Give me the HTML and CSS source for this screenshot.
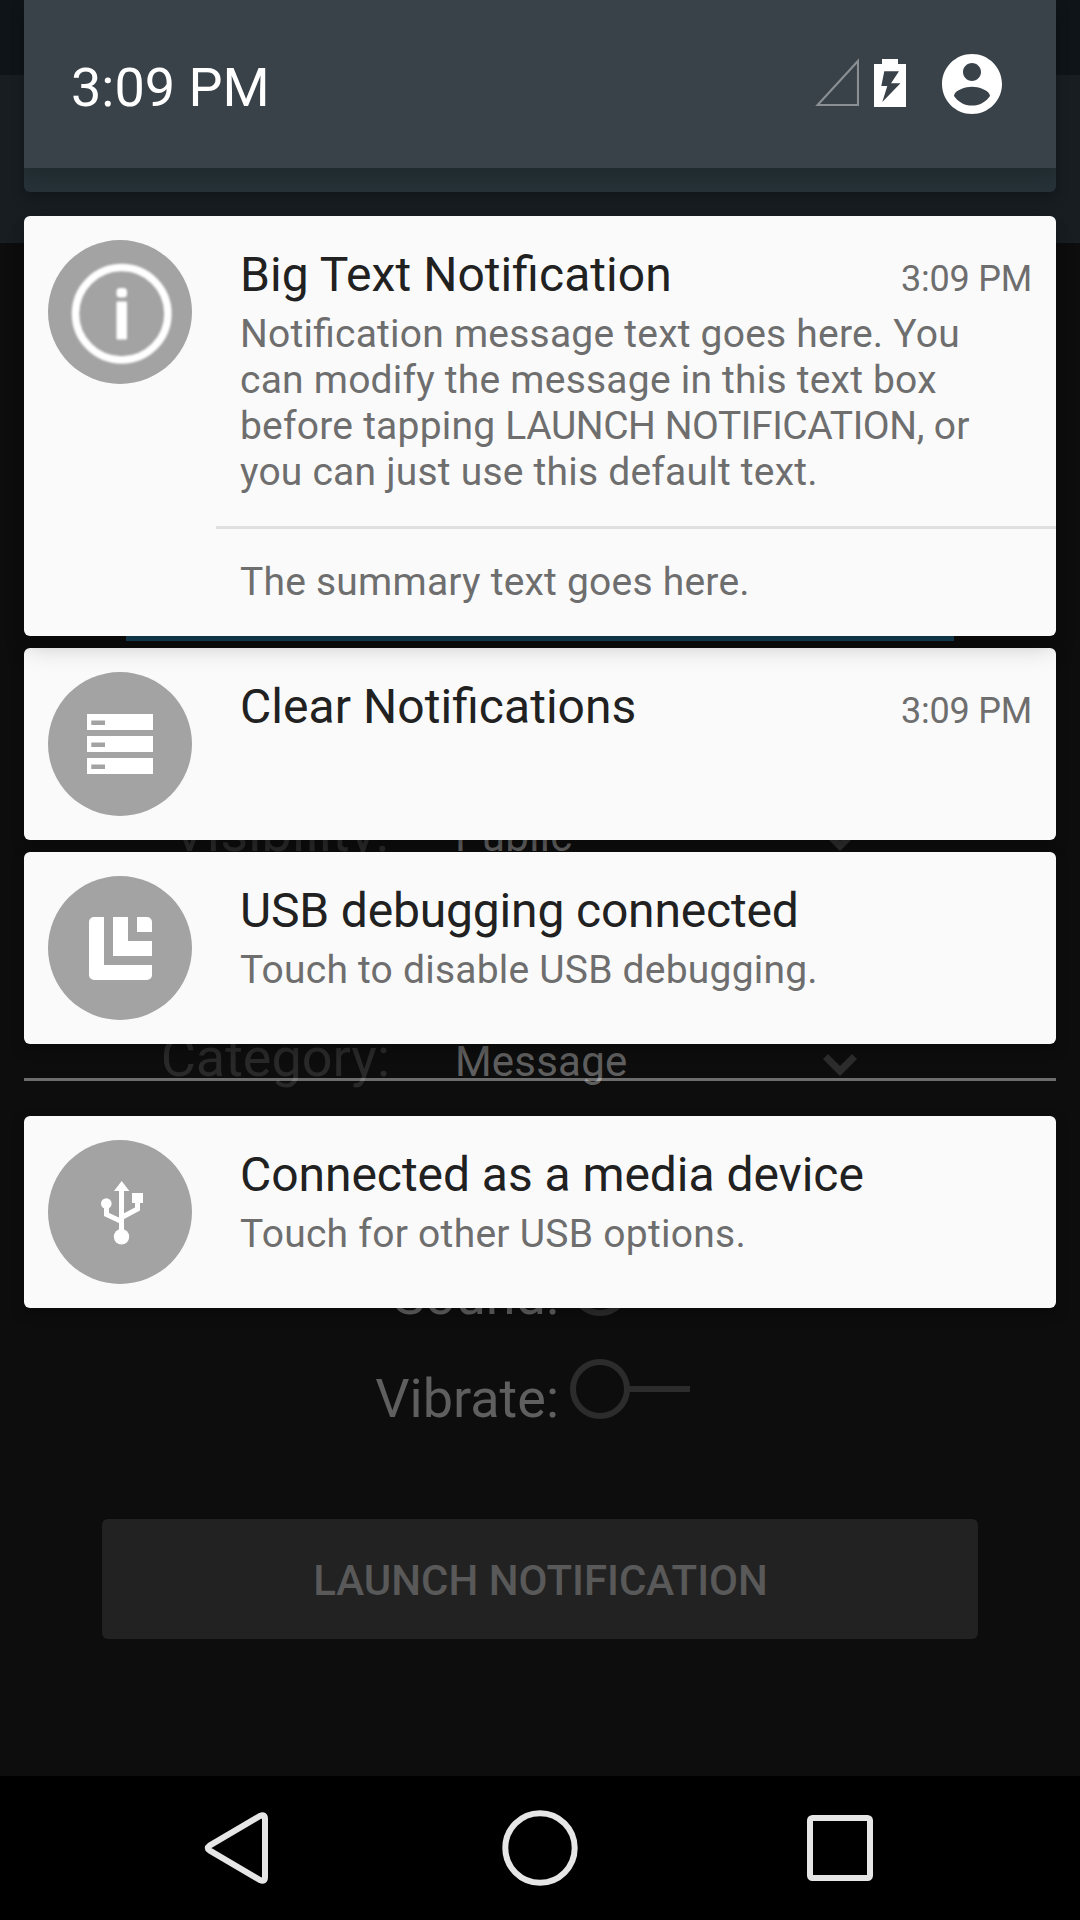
FILE: index.html
```
<!DOCTYPE html>
<html lang="en">
<head>
<meta charset="utf-8">
<title>Notification shade</title>
<link rel="stylesheet" href="styles.css">
</head>
<body>
<div class="screen">
  <div class="app">
    <div class="status-bar"></div>
    <div class="toolbar"></div>
    <div class="form">
      <div class="message-input"></div>
      <div class="spinner-row visibility">
        <span class="label">Visibility:</span>
        <span class="value public">Public</span>
        <svg class="chevron" viewBox="0 0 34 22"><path d="M0 5 5 0 17 12 29 0 34 5 17 22z"/></svg>
      </div>
      <div class="spinner-row category">
        <span class="label">Category:</span>
        <span class="value">Message</span>
        <svg class="chevron" viewBox="0 0 34 22"><path d="M0 5 5 0 17 12 29 0 34 5 17 22z"/></svg>
      </div>
      <div class="switch-row">
        <span class="label">Sound:</span>
        <svg class="switch" viewBox="0 0 120 60"><circle cx="30" cy="30" r="27"/><path d="M59 30H120"/></svg>
      </div>
      <div class="switch-row">
        <span class="label">Vibrate:</span>
        <svg class="switch" viewBox="0 0 120 60"><circle cx="30" cy="30" r="27"/><path d="M59 30H120"/></svg>
      </div>
      <div class="launch">LAUNCH NOTIFICATION</div>
    </div>
  </div>

  <div class="shade">
    <div class="header-wrap">
      <div class="header">
        <span class="clock">3:09 PM</span>
        <svg class="signal" viewBox="0 0 44 48"><path d="M2.6 47H43V3z"/></svg>
        <svg class="battery" viewBox="0 0 32 48"><path fill-rule="evenodd" d="M0 5H8V0H24V5H32V48H0zM10.3 12.3 7.3 27H13.3L8.3 43 26.5 24.3H17L25 12.3z"/></svg>
        <svg class="avatar" viewBox="2 2 20 20"><path d="M12 2C6.48 2 2 6.48 2 12s4.480 10 10 10 10-4.480 10-10S17.520 2 12 2zm0 3c1.660 0 3 1.340 3 3s-1.340 3-3 3-3-1.340-3-3 1.340-3 3-3zm0 14.200c-2.500 0-4.710-1.280-6-3.220.03-1.990 4-3.080 6-3.080 1.990 0 5.970 1.090 6 3.080-1.290 1.940-3.500 3.220-6 3.220z"/></svg>
      </div>
    </div>

    <div class="card raised">
      <svg class="icon" viewBox="0 0 144 144">
        <circle class="disc" cx="72" cy="72" r="72"/>
        <g class="soft">
          <circle cx="73.700" cy="73.700" r="46.200" fill="none" stroke="#fff" stroke-width="7.500"/>
          <rect x="68.500" y="48" width="10.500" height="9.500" rx="3.500"/>
          <rect x="68.500" y="61.500" width="10.500" height="38" rx="1"/>
        </g>
      </svg>
      <div class="content">
        <div class="title-row"><span class="title">Big Text Notification</span><span class="time">3:09 PM</span></div>
        <div class="text">
          <div>Notification message text goes here. You</div>
          <div>can modify the message in this text box</div>
          <div>before tapping <span class="tight">LAUNCH NOTIFICATION,</span> or</div>
          <div>you can just use this default text.</div>
        </div>
        <div class="summary">The summary text goes here.</div>
      </div>
    </div>

    <div class="card">
      <svg class="icon" viewBox="0 0 144 144">
        <circle class="disc" cx="72" cy="72" r="72"/>
        <path fill-rule="evenodd" d="M39 42H105V58H39zM43.300 48.500V53H57V48.500zM39 64H105V80H39zM43.300 70.500V75H57V70.500zM39 86H105V102H39zM43.300 92.500V97H57V92.500z"/>
      </svg>
      <div class="content">
        <div class="title-row"><span class="title">Clear Notifications</span><span class="time">3:09 PM</span></div>
      </div>
    </div>

    <div class="card">
      <svg class="icon" viewBox="0 0 144 144">
        <circle class="disc" cx="72" cy="72" r="72"/>
        <path d="M46 41H56V89H104V99A5 5 0 0 1 99 104H46A5 5 0 0 1 41 99V46A5 5 0 0 1 46 41zM65 41H80V65H104V80H65zM89 41H99A5 5 0 0 1 104 46V56H89z"/>
      </svg>
      <div class="content">
        <div class="title-row"><span class="title snug">USB debugging connected</span></div>
        <div class="text">Touch to disable USB debugging.</div>
      </div>
    </div>

    <div class="divider"></div>

    <div class="card">
      <svg class="icon" viewBox="0 0 144 144">
        <circle class="disc" cx="72" cy="72" r="72"/>
        <path d="M66 51 73.700 41 81.300 51z"/>
        <circle cx="73.500" cy="96.700" r="7.700"/>
        <circle cx="58.300" cy="63.500" r="5.300"/>
        <rect x="84" y="53" width="11" height="10"/>
        <path fill="none" stroke="#fff" stroke-width="5" d="M73.500 50V92M58.500 66V74.500L73.500 81.500M89.500 62V69L73.500 77.500"/>
      </svg>
      <div class="content">
        <div class="title-row"><span class="title media">Connected as a media device</span></div>
        <div class="text options">Touch for other USB options.</div>
      </div>
    </div>
  </div>

  <div class="nav-bar">
    <svg viewBox="0 0 80 80"><path d="M9.500 37.600 60 8Q65 5.600 65 11V69Q65 74.400 60 72L9.500 42.400Q6 40 9.500 37.600z"/></svg>
    <svg viewBox="0 0 80 80"><circle cx="40" cy="40" r="34.700"/></svg>
    <svg viewBox="0 0 80 80"><rect x="10" y="10" width="60" height="60" rx="2.500"/></svg>
  </div>
</div>
</body>
</html>
```

FILE: styles.css
```
* {
  box-sizing: border-box;
}

body {
  margin: 0;
  background: #000;
  font-family: Roboto, "Noto Sans", sans-serif;
  font-feature-settings: "liga" 1;
}

svg {
  display: block;
  flex: none;
}

.screen {
  width: 1080px;
  height: 1920px;
  overflow: hidden;
  display: grid;
  grid-template: 1776px 144px / 1080px;
}

/* The app and the shade share one grid cell, the shade on top. */
.app,
.shade {
  grid-area: 1 / 1;
}

.app {
  background: #0d0d0d;
  display: flex;
  flex-direction: column;
}

.status-bar {
  height: 75px;
  background: #0e1417;
}

.toolbar {
  height: 168px;
  background: #171d21;
}

.form {
  display: flex;
  flex-direction: column;
  line-height: 64px;
}

.message-input {
  height: 398px;
  margin: 0 126px;
  border-bottom: 5px solid #154259;
}

.label {
  font-size: 54px;
  text-align: right;
}

.spinner-row {
  display: grid;
  grid-template-columns: 390px 433px 34px;
  align-items: baseline;
  height: 64px;
}

.spinner-row .label {
  color: #292929;
}

.visibility {
  margin-top: 160px;
}

.visibility .label {
  padding-right: 1px;
  letter-spacing: 0.2px;
}

.category {
  margin-top: 161px;
}

.value {
  padding-left: 65px;
  font-size: 42px;
  letter-spacing: 0.2px;
  color: #5e5e5e;
}

.public {
  letter-spacing: 0.3px;
}

.chevron {
  width: 34px;
  height: 22px;
  margin-bottom: -1px;
  fill: #2c2c2c;
}

.switch-row {
  display: grid;
  grid-template-columns: 559px 120px;
  column-gap: 11px;
  height: 103px;
  color: #5f5f5f;
}

.category + .switch-row {
  margin-top: 174px;
}

.switch {
  width: 120px;
  height: 60px;
  margin-top: -8px;
  fill: none;
  stroke: #2c2c2c;
  stroke-width: 6px;
}

.launch {
  height: 120px;
  margin: 49px 102px 0;
  padding-left: 1px;
  border-radius: 6px;
  background: #222;
  color: #595959;
  font-size: 42px;
  font-weight: 500;
  line-height: 123px;
  text-align: center;
}

.shade {
  display: flex;
  flex-direction: column;
  width: 1032px;
  margin: 0 24px;
}

.header-wrap {
  height: 192px;
  margin-bottom: 24px;
  border-radius: 0 0 6px 6px;
  background: #263238;
  overflow: hidden;
  flex: none;
}

.header-wrap,
.card {
  box-shadow: 0 5px 14px rgba(0, 0, 0, 0.26);
}

.header {
  display: flex;
  align-items: flex-start;
  height: 168px;
  padding: 54px 54px 0 47px;
  background: #3a4249;
  box-shadow: 0 8px 20px rgba(0, 0, 0, 0.2);
}

.clock {
  margin-top: 2px;
  margin-right: auto;
  color: #fff;
  font-size: 54px;
  line-height: 64px;
}

.signal {
  width: 44px;
  height: 48px;
  margin-top: 4px;
  margin-right: 15px;
  fill: none;
  stroke: #8a8f93;
  stroke-width: 2.1px;
}

.battery {
  width: 32px;
  height: 48px;
  margin-top: 5px;
  margin-right: 36px;
  fill: #fff;
}

.avatar {
  width: 60px;
  height: 60px;
  fill: #fff;
}

.card {
  display: flex;
  flex: none;
  min-height: 192px;
  margin-bottom: 12px;
  border-radius: 6px;
  background: #fafafa;
}

.raised {
  position: relative;
  height: 420px;
  box-shadow: 0 16px 24px -4px rgba(0, 0, 0, 0.18), 0 5px 14px rgba(0, 0, 0, 0.1);
}

.icon {
  width: 144px;
  height: 144px;
  margin: 24px;
  fill: #fff;
}

.disc {
  fill: #a3a3a3;
}

.soft {
  filter: blur(0.8px);
}

.content {
  flex: 1;
  padding-top: 31px;
}

.title-row {
  display: flex;
  justify-content: space-between;
  align-items: baseline;
  height: 56px;
  padding: 0 24px;
  line-height: 56px;
}

.title {
  color: #212121;
  font-size: 48px;
  letter-spacing: 0.05px;
}

.snug {
  letter-spacing: -0.17px;
}

.media {
  letter-spacing: -0.05px;
}

.time {
  color: #6e6e6e;
  font-size: 36px;
  letter-spacing: -0.2px;
}

.text,
.summary {
  color: #6e6e6e;
  font-size: 39px;
  letter-spacing: 0.22px;
  line-height: 46px;
  white-space: nowrap;
}

.text {
  padding: 8px 24px 0;
}

.options {
  letter-spacing: 0.27px;
}

.tight {
  letter-spacing: -0.43px;
}

.summary {
  margin-top: 31px;
  padding: 30px 24px 0;
  border-top: 3px solid #e0e0e0;
}

.divider {
  flex: none;
  height: 3px;
  margin: 22px 0 35px;
  background: rgba(255, 255, 255, 0.4);
}

.nav-bar {
  display: flex;
  justify-content: center;
  align-items: center;
  gap: 220px;
  background: #000;
}

.nav-bar svg {
  width: 80px;
  height: 80px;
  fill: none;
  stroke: #e6e6e6;
  stroke-width: 6px;
}
```
